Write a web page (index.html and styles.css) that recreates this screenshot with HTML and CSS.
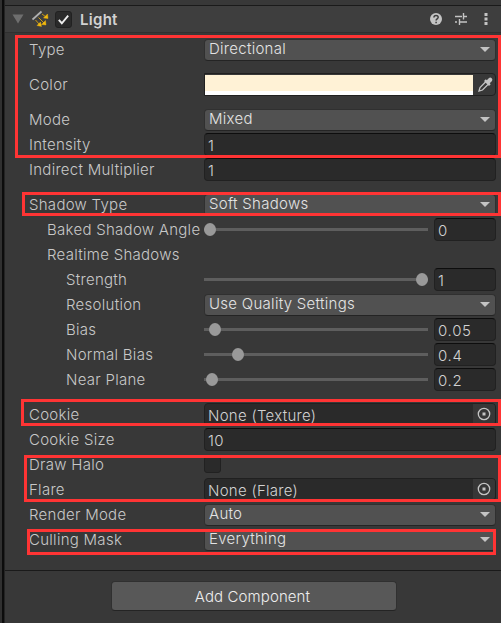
FILE: index.html
```html
<!DOCTYPE html>
<html lang="en">
<head>
<meta charset="utf-8">
<title>Inspector</title>
<link rel="stylesheet" href="styles.css">
</head>
<body>
<div class="inspector">
  <section class="component">
    <header class="head">
      <svg class="fold" viewBox="0 0 12 10"><path d="M.5 .5h11L6 9.5z" fill="#6e6e6e"/></svg>
      <svg class="light-icon" viewBox="0 0 18 18">
        <path d="M.5 9.500L9.500 1.500" stroke="#b0b0b0" stroke-width="1.800" fill="none"/>
        <path d="M3.500 10l4 4.500M6.500 7.500l5.500 5.500M10 4l4 3" stroke="#c99a14" stroke-width="1" fill="none"/>
        <path d="M8.500 12l1 4.500-4.500-1zM13.500 10.500l.5 4.500-4.500-.5zM15.500 4l.5 4.500-4.500-.5z" fill="#f2b90c" stroke="#f2b90c" stroke-width=".4"/>
      </svg>
      <span class="check on"><svg viewBox="0 0 16 16"><path d="M3 8.500l3.200 3.500L13 3.800" stroke="#eee" stroke-width="2" fill="none"/></svg></span>
      <h1>Light</h1>
      <svg class="tools" viewBox="0 0 62 16">
        <circle cx="6" cy="8" r="6" fill="#c4c4c4"/>
        <path d="M3.900 6.600C3.900 3.700 8.200 3.800 8.200 6.300C8.200 7.900 6.100 7.800 6.100 9.500M6.100 10.700v1.500" stroke="#3c3c3c" stroke-width="1.500" fill="none"/>
        <path d="M25 5.500h7M34 5.500h3M33.500 2v6.500M25 11h2M30 11h7M29.500 8v6" stroke="#c4c4c4" stroke-width="1.400" fill="none"/>
        <path d="M54.500 2h3v3h-3zM54.500 6.500h3v3h-3zM54.500 11h3v3h-3z" fill="#c4c4c4"/>
      </svg>
    </header>
    <div class="rows">
      <div class="row"><label>Type</label><div class="drop">Directional</div></div>
      <div class="row gap"><label>Color</label><div class="color"><i class="swatch"></i>
        <svg viewBox="0 0 16 16"><path d="M2 14l1-3.500L9 4.500l2.500 2.500-6 6z" fill="none" stroke="#c4c4c4" stroke-width="1.300"/><path d="M7 4L8.800 2.300l1 1L12 1q1.500-1 2.700.3t.3 2.800L12.700 6.300l1 1L12 9z" fill="#c4c4c4"/></svg></div></div>
      <div class="row gap"><label>Mode</label><div class="drop">Mixed</div></div>
      <div class="row"><label>Intensity</label><div class="field">1</div></div>
      <div class="row"><label>Indirect Multiplier</label><div class="field">1</div></div>
      <div class="row gap"><label>Shadow Type</label><div class="drop">Soft Shadows</div></div>
      <div class="row in1"><label>Baked Shadow Angle</label><div class="slider"><i class="knob" style="left:0px"></i></div><div class="field num">0</div></div>
      <div class="row in1"><label>Realtime Shadows</label></div>
      <div class="row in2"><label>Strength</label><div class="slider"><i class="knob" style="left:212px"></i></div><div class="field num">1</div></div>
      <div class="row in2"><label>Resolution</label><div class="drop">Use Quality Settings</div></div>
      <div class="row in2"><label>Bias</label><div class="slider"><i class="knob" style="left:5px"></i></div><div class="field num">0.05</div></div>
      <div class="row in2"><label>Normal Bias</label><div class="slider"><i class="knob" style="left:28px"></i></div><div class="field num">0.4</div></div>
      <div class="row in2"><label>Near Plane</label><div class="slider"><i class="knob" style="left:2px"></i></div><div class="field num">0.2</div></div>
      <div class="row gap"><label>Cookie</label><div class="field object">None (Texture)<span class="pick"><svg viewBox="0 0 14 14"><circle cx="7" cy="7" r="5.700"/><path d="M5.500 5.500h3v3h-3z"/></svg></span></div></div>
      <div class="row"><label>Cookie Size</label><div class="field">10</div></div>
      <div class="row"><label>Draw Halo</label><span class="check"></span></div>
      <div class="row"><label>Flare</label><div class="field object">None (Flare)<span class="pick"><svg viewBox="0 0 14 14"><circle cx="7" cy="7" r="5.700"/><path d="M5.500 5.500h3v3h-3z"/></svg></span></div></div>
      <div class="row"><label>Render Mode</label><div class="drop">Auto</div></div>
      <div class="row"><label>Culling Mask</label><div class="drop">Everything</div></div>
    </div>
  </section>
  <footer class="foot"><button class="add">Add Component</button></footer>
  <div class="mark m1"></div>
  <div class="mark m2"></div>
  <div class="mark m3"></div>
  <div class="mark m4"></div>
  <div class="mark m5"></div>
</div>
</body>
</html>
```
FILE: styles.css
```css
* { box-sizing: border-box; }
body {
  margin: 0;
  background: #383838;
  color: #c8c8c8;
  font: 350 15px/22px Inter, sans-serif;
  letter-spacing: 0.28px;
  overflow: hidden;
}
.inspector {
  position: relative;
  width: 501px;
  height: 623px;
  padding-top: 5px;
  border-left: 2px solid #303030;
  box-shadow: inset 2px 0 #0c0c0c, inset 3px 0 #242424;
}
.component, .foot { margin-left: 3px; }
.component {
  height: 566px;
  border-top: 1px solid #1a1a1a;
  border-bottom: 1px solid #1a1a1a;
}
.head {
  display: flex;
  align-items: center;
  height: 27px;
  padding-left: 7px;
  background: #3e3e3e;
  border-bottom: 1px solid #303030;
}
.fold { width: 12px; height: 10px; }
.light-icon { width: 18px; height: 18px; margin-left: 8px; }
.check {
  width: 17px;
  height: 17px;
  background: #2a2a2a;
  border: 1px solid #212121;
  border-radius: 3px;
}
.check.on { margin: 0 0 0 5px; }
.check svg { display: block; width: 15px; height: 15px; }
h1 { margin: 1px 0 0 8px; font-size: 15px; line-height: 22px; font-weight: 600; color: #d2d2d2; }
.tools { width: 62px; height: 16px; margin-left: auto; margin-right: 9px; }
.rows { padding: 4px 5px 0 24px; }
.row { display: flex; align-items: center; height: 25px; }
.row.gap { margin-top: 10px; }
label { width: 175px; flex: none; white-space: nowrap; }
.in1 { padding-left: 18px; }
.in1 label { width: 157px; }
.in2 { padding-left: 37px; }
.in2 label { width: 138px; }
.drop {
  position: relative;
  flex: 1;
  height: 22px;
  padding-left: 4px;
  line-height: 18px;
  background: #515151;
  border: 1px solid #303030;
  border-bottom-color: #242424;
  border-radius: 4px;
  color: #e4e4e4;
}
.drop::after {
  content: "";
  position: absolute;
  right: 5px;
  top: 7px;
  border: 5px solid transparent;
  border-top-color: #c4c4c4;
  border-bottom: 0;
}
.field {
  flex: 1;
  height: 23px;
  padding-left: 3px;
  line-height: 23px;
  background: #2a2a2a;
  border: 1px solid #212121;
  border-top-color: #0d0d0d;
  border-radius: 4px;
  color: #d2d2d2;
}
.num { flex: none; width: 62px; margin-left: 6px; letter-spacing: 0.7px; }
.object { display: flex; justify-content: space-between; border-color: #202020; }
.pick { width: 22px; height: 20px; padding: 3px 4px; background: #373737; border-radius: 0 3px 3px 0; }
.pick svg { display: block; width: 14px; height: 14px; }
.pick circle { fill: none; stroke: #c4c4c4; stroke-width: 1.3; }
.pick path { fill: #c4c4c4; }
.color {
  flex: 1;
  display: flex;
  align-items: center;
  height: 23px;
  border: 1px solid #202020;
  border-radius: 0 4px 4px 0;
}
.swatch { width: 268px; height: 20px; background: #fff2d6; border-bottom: 4px solid #fff; }
.color svg { width: 16px; height: 16px; margin-left: 4px; }
.slider {
  position: relative;
  width: 224px;
  height: 3px;
  background: #5e5e5e;
}
.knob { position: absolute; top: -5px; width: 12px; height: 13px; border-radius: 50%; background: #999; }
.foot { display: flex; justify-content: center; padding: 10px 0 0 0; }
.add {
  width: 286px;
  height: 30px;
  margin-left: 1px;
  padding: 2px 2px 0 0;
  background: #585858;
  border: 1px solid #303030;
  border-bottom-color: #242424;
  border-radius: 4px;
  color: #eee;
  font: inherit;
  letter-spacing: 0.1px;
}
.mark { position: absolute; border: 3px solid #ff3434; }
.m1 { left: 13px; top: 35px; width: 486px; height: 123px; }
.m2 { left: 20px; top: 192px; width: 479px; height: 24px; }
.m3 { left: 19px; top: 399px; width: 480px; height: 27px; }
.m4 { left: 22px; top: 455px; width: 477px; height: 47px; }
.m5 { left: 25px; top: 529px; width: 469px; height: 26px; }
```
